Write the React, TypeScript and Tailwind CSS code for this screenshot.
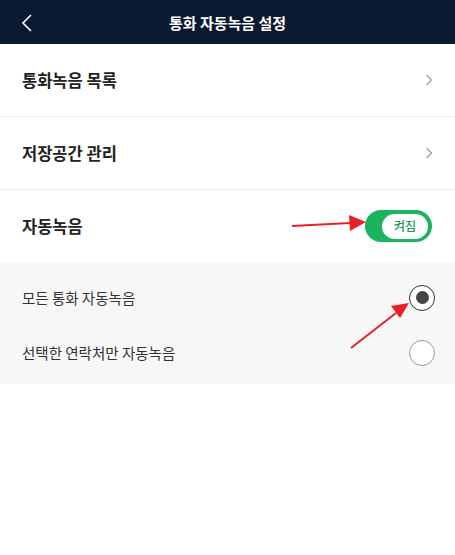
import React from "react";

export default function App() {
  const font = { fontFamily: '"Noto Sans CJK KR", "Noto Sans", sans-serif' };
  return (
    <div className="relative w-[455px] h-[555px] bg-white overflow-hidden" style={font}>
      <div className="h-[44px] bg-[#0b1930] flex items-center relative">
        <svg className="absolute left-[20px] top-[13px]" width="14" height="20" viewBox="0 0 14 20">
          <path d="M11 2 L3 10 L11 18" fill="none" stroke="#ffffff" strokeWidth="1.6" />
        </svg>
        <div className="w-full text-center text-white text-[15px] font-bold leading-none">통화 자동녹음 설정</div>
      </div>
      <div className="h-[73px] flex items-center justify-between pl-[22px] pr-[22px] border-b border-[#ececec]">
        <span className="text-[16.5px] font-bold text-[#222]">통화녹음 목록</span>
        <svg width="8" height="12" viewBox="0 0 8 12"><path d="M1.5 1 L6.5 6 L1.5 11" fill="none" stroke="#9a9a9a" strokeWidth="1.2" /></svg>
      </div>
      <div className="h-[73px] flex items-center justify-between pl-[22px] pr-[22px] border-b border-[#ececec]">
        <span className="text-[16.5px] font-bold text-[#222]">저장공간 관리</span>
        <svg width="8" height="12" viewBox="0 0 8 12"><path d="M1.5 1 L6.5 6 L1.5 11" fill="none" stroke="#9a9a9a" strokeWidth="1.2" /></svg>
      </div>
      <div className="h-[72px] flex items-center justify-between pl-[22px] pr-[23px]">
        <span className="text-[16.5px] font-bold text-[#222]">자동녹음</span>
        <div className="w-[67px] h-[32px] rounded-full bg-[#1ab45e] flex items-center justify-end pr-[4px]">
          <div className="w-[46px] h-[25px] rounded-full bg-white flex items-center justify-center text-[12px] text-[#1a9a55] font-medium">켜짐</div>
        </div>
      </div>
      <div className="bg-[#f7f7f7] pt-[8px] pb-[4px]">
        <div className="h-[55px] flex items-center justify-between pl-[22px] pr-[20px]">
          <span className="text-[14.5px] text-[#333]">모든 통화 자동녹음</span>
          <div className="w-[26px] h-[26px] rounded-full border-[1.5px] border-[#333] bg-white flex items-center justify-center">
            <div className="w-[13px] h-[13px] rounded-full bg-[#444]" />
          </div>
        </div>
        <div className="h-[55px] flex items-center justify-between pl-[22px] pr-[20px]">
          <span className="text-[14.5px] text-[#333]">선택한 연락처만 자동녹음</span>
          <div className="w-[26px] h-[26px] rounded-full border border-[#9a9a9a] bg-white" />
        </div>
      </div>
      <svg className="absolute left-0 top-0 pointer-events-none" width="455" height="555">
        <line x1="292" y1="226" x2="350" y2="223" stroke="#e8202a" strokeWidth="2" />
        <polygon points="366,222 349,215 350,231" fill="#e8202a" />
        <line x1="351" y1="348" x2="396" y2="313" stroke="#e8202a" strokeWidth="2" />
        <polygon points="409,303 391,306 400,318" fill="#e8202a" />
      </svg>
    </div>
  );
}
